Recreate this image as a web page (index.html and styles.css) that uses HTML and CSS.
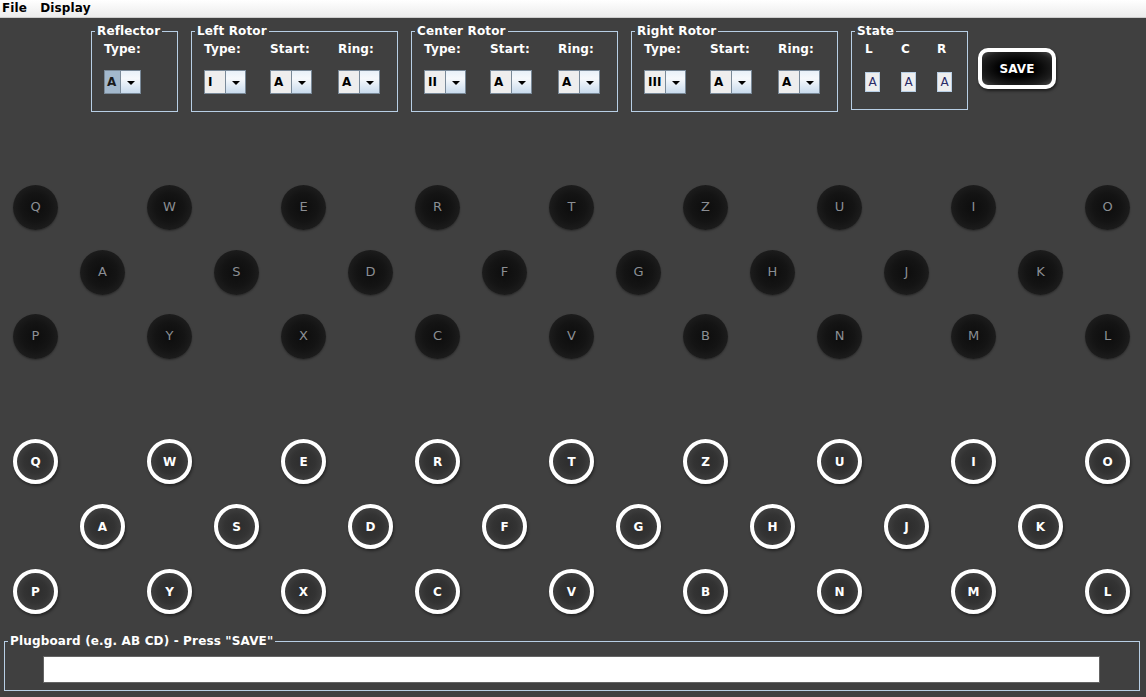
FILE: index.html
```html
<!DOCTYPE html>
<html>
<head>
<meta charset="utf-8">
<title>Enigma</title>
<link rel="stylesheet" href="styles.css">
</head>
<body>
<div class="menubar"><span class="menu">File</span><span class="menu">Display</span></div>

<div class="toprow">
  <fieldset class="panel">
    <legend>Reflector</legend>
    <div class="body refl">
      <div class="col w38"><span class="lbl">Type:</span><div class="combo small sel"><span class="val">A</span><span class="btn"><i class="tri"></i></span></div></div>
    </div>
  </fieldset>

  <fieldset class="panel">
    <legend>Left Rotor</legend>
    <div class="body rotor">
      <div class="col w66"><span class="lbl">Type:</span><div class="combo"><span class="val">I</span><span class="btn"><i class="tri"></i></span></div></div>
      <div class="col w68"><span class="lbl">Start:</span><div class="combo"><span class="val">A</span><span class="btn"><i class="tri"></i></span></div></div>
      <div class="col w42"><span class="lbl">Ring:</span><div class="combo"><span class="val">A</span><span class="btn"><i class="tri"></i></span></div></div>
    </div>
  </fieldset>

  <fieldset class="panel">
    <legend>Center Rotor</legend>
    <div class="body rotor">
      <div class="col w66"><span class="lbl">Type:</span><div class="combo"><span class="val">II</span><span class="btn"><i class="tri"></i></span></div></div>
      <div class="col w68"><span class="lbl">Start:</span><div class="combo"><span class="val">A</span><span class="btn"><i class="tri"></i></span></div></div>
      <div class="col w42"><span class="lbl">Ring:</span><div class="combo"><span class="val">A</span><span class="btn"><i class="tri"></i></span></div></div>
    </div>
  </fieldset>

  <fieldset class="panel">
    <legend>Right Rotor</legend>
    <div class="body rotor">
      <div class="col w66"><span class="lbl">Type:</span><div class="combo"><span class="val">III</span><span class="btn"><i class="tri"></i></span></div></div>
      <div class="col w68"><span class="lbl">Start:</span><div class="combo"><span class="val">A</span><span class="btn"><i class="tri"></i></span></div></div>
      <div class="col w42"><span class="lbl">Ring:</span><div class="combo"><span class="val">A</span><span class="btn"><i class="tri"></i></span></div></div>
    </div>
  </fieldset>

  <fieldset class="panel">
    <legend>State</legend>
    <div class="body state">
      <div class="col w36"><span class="lbl">L</span><div class="field">A</div></div>
      <div class="col w36"><span class="lbl">C</span><div class="field">A</div></div>
      <div class="col w15"><span class="lbl">R</span><div class="field">A</div></div>
    </div>
  </fieldset>

  <button class="save">SAVE</button>
</div>

<div class="lamps">
  <div class="row odd">
    <span class="lamp">Q</span><span class="lamp">W</span><span class="lamp">E</span><span class="lamp">R</span><span class="lamp">T</span><span class="lamp">Z</span><span class="lamp">U</span><span class="lamp">I</span><span class="lamp">O</span>
  </div>
  <div class="row even">
    <span class="lamp">A</span><span class="lamp">S</span><span class="lamp">D</span><span class="lamp">F</span><span class="lamp">G</span><span class="lamp">H</span><span class="lamp">J</span><span class="lamp">K</span>
  </div>
  <div class="row odd">
    <span class="lamp">P</span><span class="lamp">Y</span><span class="lamp">X</span><span class="lamp">C</span><span class="lamp">V</span><span class="lamp">B</span><span class="lamp">N</span><span class="lamp">M</span><span class="lamp">L</span>
  </div>
</div>

<div class="keys">
  <div class="row odd">
    <span class="key">Q</span><span class="key">W</span><span class="key">E</span><span class="key">R</span><span class="key">T</span><span class="key">Z</span><span class="key">U</span><span class="key">I</span><span class="key">O</span>
  </div>
  <div class="row even">
    <span class="key">A</span><span class="key">S</span><span class="key">D</span><span class="key">F</span><span class="key">G</span><span class="key">H</span><span class="key">J</span><span class="key">K</span>
  </div>
  <div class="row odd">
    <span class="key">P</span><span class="key">Y</span><span class="key">X</span><span class="key">C</span><span class="key">V</span><span class="key">B</span><span class="key">N</span><span class="key">M</span><span class="key">L</span>
  </div>
</div>

<fieldset class="panel plug">
  <legend>Plugboard (e.g. AB CD) - Press "SAVE"</legend>
  <div class="plugbody"><div class="input"></div></div>
</fieldset>
</body>
</html>
```

FILE: styles.css
```css
* { box-sizing: border-box; }

html, body {
  margin: 0;
  padding: 0;
}

body {
  width: 1146px;
  height: 697px;
  overflow: hidden;
  background: #404040;
  font-family: "DejaVu Sans", "Noto Sans", sans-serif;
  font-size: 12px;
}

/* menu bar */
.menubar {
  height: 18px;
  display: flex;
  align-items: center;
  gap: 13px;
  padding-left: 2px;
  background: linear-gradient(#ffffff, #ececec);
  border-bottom: 1px solid #cdcdcd;
  font-weight: bold;
  font-size: 12px;
  line-height: 15px;
  letter-spacing: 0.15px;
  color: #000;
}

/* top controls */
.toprow {
  display: flex;
  align-items: flex-start;
  gap: 13px;
  margin-top: 6px;
  padding-left: 91px;
}

.panel {
  margin: 0;
  padding: 0;
  min-width: 0;
  border: 1px solid #b8cfe5;
}

.panel legend {
  margin-left: 3px;
  padding: 0 2px;
  font-weight: bold;
  font-size: 12px;
  line-height: 15px;
  letter-spacing: 0.15px;
  color: #fff;
  white-space: nowrap;
}

.body {
  display: flex;
  padding: 3px 17px 17px 12px;
}
.body.refl { padding-right: 35px; }
.body.state { padding-left: 13px; padding-right: 15px; }

.col {
  display: flex;
  flex-direction: column;
  align-items: flex-start;
}
.w38 { width: 38px; }
.w66 { width: 66px; }
.w68 { width: 68px; }
.w42 { width: 42px; }
.w36 { width: 36px; }
.w15 { width: 15px; }

.lbl {
  height: 15px;
  line-height: 15px;
  margin-bottom: 13px;
  color: #fff;
  font-weight: bold;
  font-size: 12px;
  letter-spacing: 0.15px;
  white-space: nowrap;
}

/* combo box */
.combo {
  display: flex;
  width: 42px;
  height: 24px;
  border: 1px solid #7a8a99;
  background: #eeeeee;
}
.combo.small { width: 37px; }
.combo .val {
  flex: 1;
  padding-left: 3px;
  font-weight: bold;
  font-size: 12px;
  line-height: 22px;
  color: #000;
  background: #eeeeee;
}
.combo.sel .val {
  background: #a3b8cc;
  padding-left: 2px;
  color: #1a1a1a;
}
.combo .btn {
  width: 20px;
  display: flex;
  align-items: center;
  justify-content: center;
  border-left: 1px solid #7a8a99;
  background: linear-gradient(#e9f1f9, #f6f9fc 35%, #c9dbed 100%);
}
.tri {
  width: 0;
  height: 0;
  border-left: 4px solid transparent;
  border-right: 4px solid transparent;
  border-top: 4px solid #000;
  margin-top: 1px;
}

/* state fields */
.field {
  width: 15px;
  height: 20px;
  margin-top: 2px;
  border: 1px solid #b8cfe5;
  background: #eeeeee;
  color: #2a2a66;
  font-size: 12px;
  line-height: 18px;
  text-align: center;
}

/* save button */
.save {
  margin: 24px 0 0 -3px;
  width: 78px;
  height: 41px;
  border: 4px solid #fff;
  border-radius: 10px;
  background: radial-gradient(ellipse at center, #000 35%, #1e1e1e 75%, #4a4a4a 100%);
  box-shadow: 1px 2px 3px rgba(0, 0, 0, 0.55);
  color: #fff;
  font-family: "DejaVu Sans", sans-serif;
  font-weight: bold;
  font-size: 12px;
  letter-spacing: 0.15px;
  padding: 0;
}

/* lamp & key rows */
.row {
  display: flex;
  gap: 89px;
}
.row.odd { padding-left: 13px; }
.row.even { padding-left: 80px; }

.lamps {
  margin-top: 73px;
  display: flex;
  flex-direction: column;
  gap: 19.5px;
}

.lamp {
  width: 45px;
  height: 45px;
  border-radius: 50%;
  display: flex;
  align-items: center;
  justify-content: center;
  padding-bottom: 2px;
  background: radial-gradient(circle at center, #0d0d0d 0%, #141414 45%, #1f1f1f 80%, #2b2b2b 100%);
  box-shadow: 0 1px 2px rgba(0, 0, 0, 0.35);
  color: #8b8e93;
  font-size: 13px;
}

.keys {
  margin-top: 80px;
  display: flex;
  flex-direction: column;
  gap: 20px;
}

.key {
  width: 45px;
  height: 45px;
  border-radius: 50%;
  border: 4px solid #fff;
  display: flex;
  align-items: center;
  justify-content: center;
  background: radial-gradient(circle at center, #2c2c2c 0%, #333 45%, #4a4a4a 100%);
  box-shadow: 1px 2px 3px rgba(0, 0, 0, 0.45);
  color: #fff;
  font-weight: bold;
  font-size: 12px;
}

/* plugboard */
.plug {
  margin: 20px 0 0 4px;
  width: 1136px;
}
.plugbody {
  padding: 7px 0 7px 38px;
}
.input {
  width: 1057px;
  height: 27px;
  background: #fff;
  border: 1px solid #646464;
}
```
